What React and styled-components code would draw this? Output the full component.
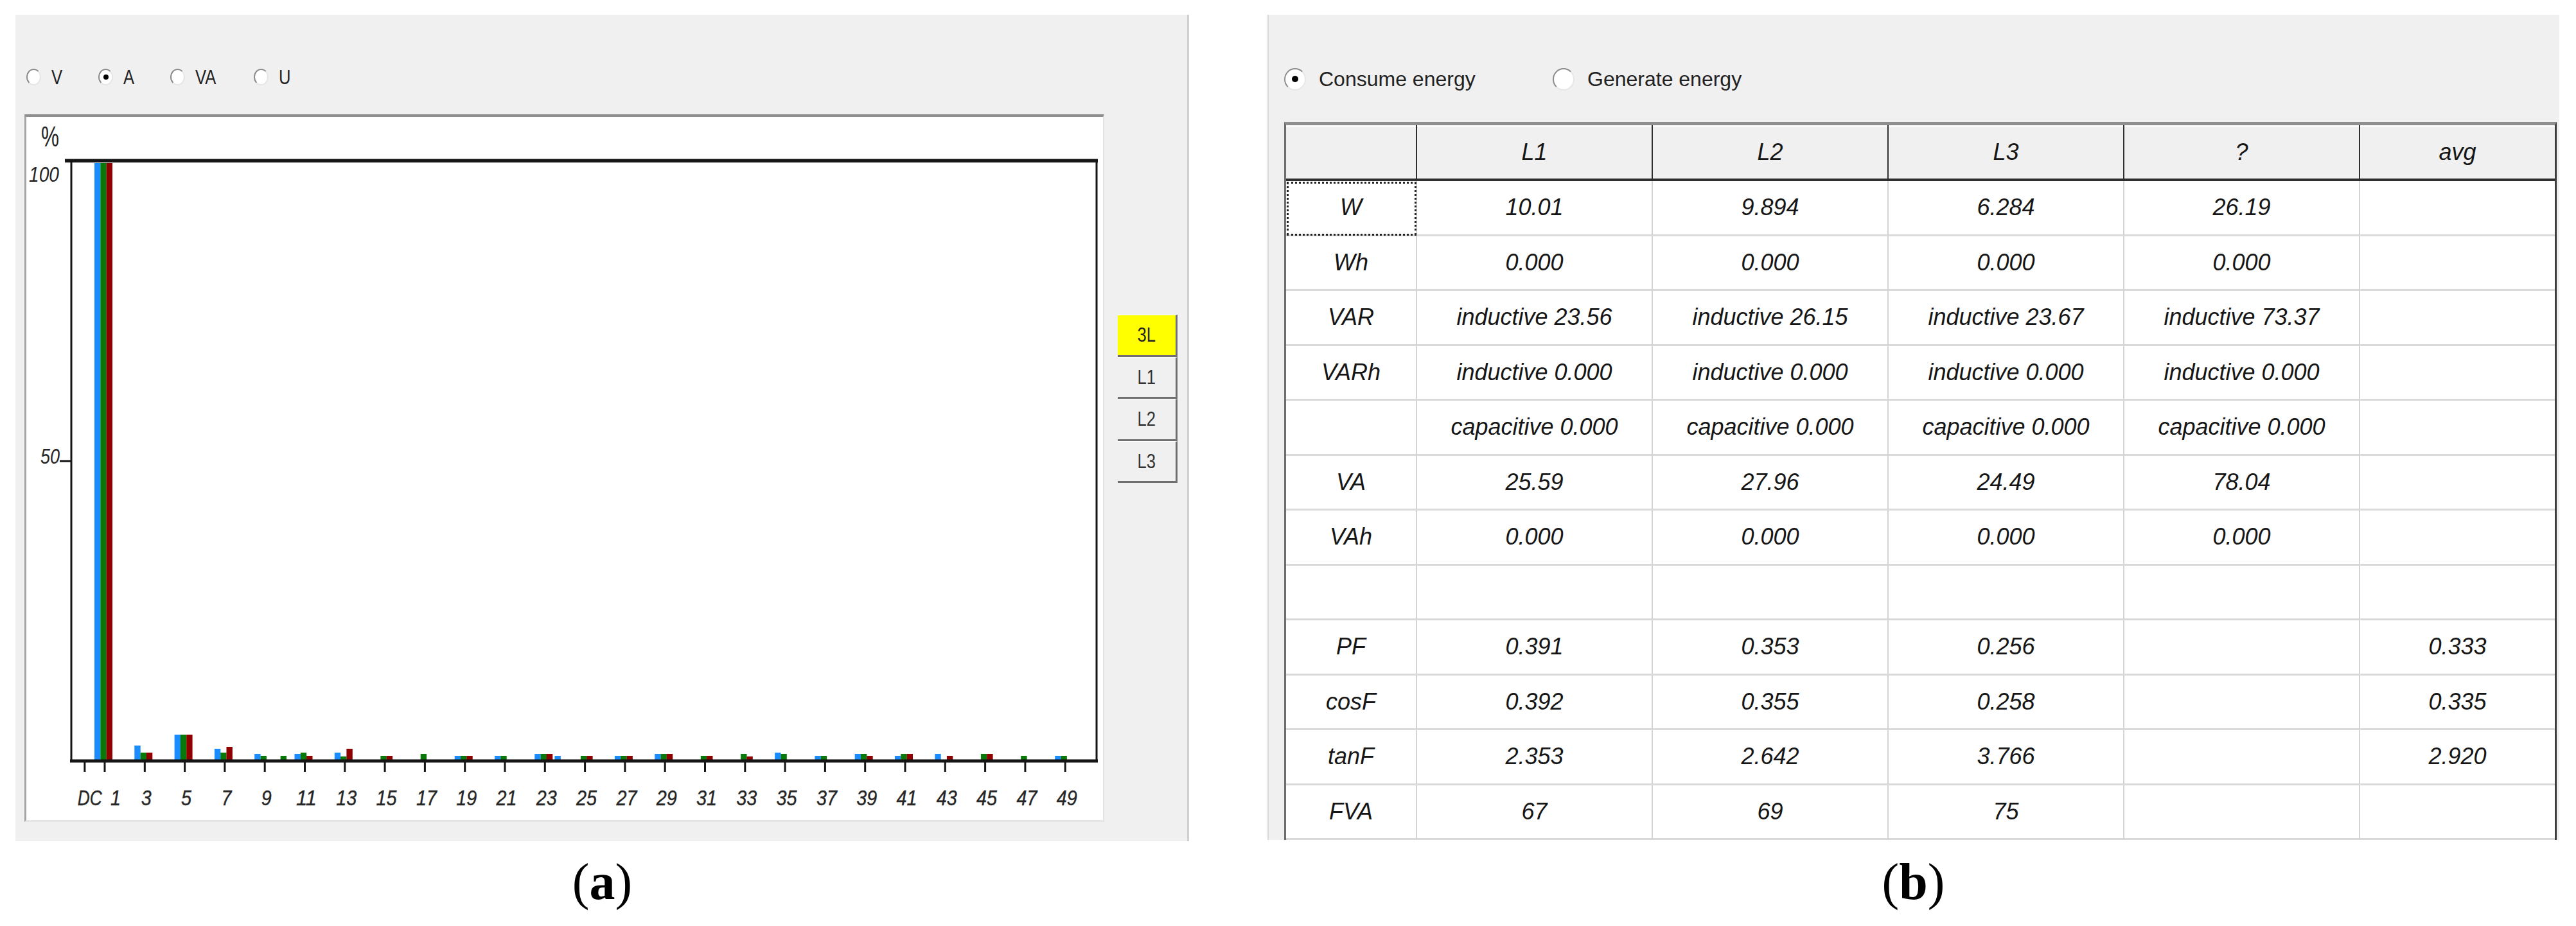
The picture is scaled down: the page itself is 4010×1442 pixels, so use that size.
import React from "react";
import styled, { createGlobalStyle, css } from "styled-components";

const GlobalStyle = createGlobalStyle`
  html, body {
    margin: 0;
    padding: 0;
    background: #ffffff;
    font-family: "Liberation Sans", Arial, sans-serif;
  }
`;

// Page layout
const Page = styled.div`
  width: 4010px;
  height: 1442px;
  padding: 23px 0 0 24px;
  box-sizing: border-box;
  display: flex;
  flex-direction: column;
`;

const TopRow = styled.div`
  display: flex;
  gap: 122px;
  align-items: flex-start;
`;

const CaptionRow = styled.div`
  display: flex;
  gap: 122px;
  margin-top: 23px;
`;

const Caption = styled.div`
  width: ${props => props.$width}px;
  text-align: center;
  font-family: "Liberation Serif", "Times New Roman", serif;
  font-size: 80px;
  line-height: 80px;
  color: #000;
  b {
    font-weight: bold;
  }
`;

// Panels
const PanelA = styled.div`
  width: 1827px;
  height: 1287px;
  box-sizing: border-box;
  background: #f0f0f0;
  border-right: 3px solid #cfcfcf;
  padding-left: 14px;
  display: flex;
  flex-direction: column;
`;

const PanelB = styled.div`
  width: 2011px;
  height: 1285px;
  box-sizing: border-box;
  background: #f0f0f0;
  border-left: 2px solid #dadada;
  padding: 0 4px 0 24px;
  display: flex;
  flex-direction: column;
`;

const RadioRow = styled.div`
  height: ${props => props.$height}px;
  padding-top: ${props => props.$top}px;
  padding-left: ${props => props.$left || 0}px;
  box-sizing: border-box;
  display: flex;
  align-items: center;
  flex-shrink: 0;
`;

const RadioItem = styled.div`
  display: flex;
  align-items: center;
  width: ${props => (props.$width ? `${props.$width}px` : "auto")};
  gap: ${props => props.$gap}px;
`;

const RadioCircle = styled.span`
  position: relative;
  display: inline-block;
  width: ${props => props.$w}px;
  height: ${props => props.$h}px;
  box-sizing: border-box;
  border-radius: 50%;
  background: #ffffff;
  border: 2px solid;
  border-color: #8c8c8c #e6e6e6 #e6e6e6 #8c8c8c;
  ${props => props.$checked && css`
    &::after {
      content: "";
      position: absolute;
      left: 50%;
      top: 50%;
      width: ${props.$dot}px;
      height: ${props.$dot}px;
      margin: -${props.$dot / 2}px 0 0 -${props.$dot / 2}px;
      border-radius: 50%;
      background: #000;
    }
  `}
`;

const RadioLabel = styled.span`
  display: inline-block;
  font-size: ${props => props.$size}px;
  color: #222;
  white-space: nowrap;
  transform: scaleX(${props => props.$squeeze || 1});
  transform-origin: left center;
`;

// Chart area
const ChartRow = styled.div`
  display: flex;
  gap: 21px;
  align-items: flex-start;
`;

const ChartBox = styled.div`
  width: 1681px;
  height: 1102px;
  box-sizing: border-box;
  background: #ffffff;
  border-top: 4px solid #8e8e8e;
  border-left: 3px solid #a3a3a3;
  border-right: 2px solid #e3e3e3;
  border-bottom: 3px solid #e6e6e6;
  svg {
    display: block;
  }
`;

const ButtonStack = styled.div`
  margin-top: 312px;
  width: 93px;
  display: flex;
  flex-direction: column;
`;

const PhaseButton = styled.div`
  height: 65.5px;
  box-sizing: border-box;
  display: flex;
  align-items: center;
  justify-content: center;
  background: ${props => (props.$active ? "#ffff00" : "#f0f0f0")};
  border-right: 3px solid #6f6f6f;
  border-bottom: 3px solid #6f6f6f;
  border-top: 1px solid #ffffff;
  span {
    display: inline-block;
    font-size: 32px;
    color: ${props => (props.$active ? "#222" : "#333")};
    transform: scaleX(0.8);
  }
`;

// Table
const Table = styled.div`
  flex: 1;
  overflow: hidden;
  background: #ffffff;
  border-top: 5px solid #8f8f8f;
  border-left: 3px solid #6e6e6e;
  border-right: 3px solid #3d3d3d;
  display: grid;
  grid-template-columns: 204px repeat(4, 367px) 1fr;
  grid-template-rows: 87px;
  grid-auto-rows: 85.5px;
`;

const Cell = styled.div`
  box-sizing: border-box;
  display: flex;
  align-items: center;
  justify-content: center;
  font-size: 36px;
  font-style: italic;
  color: #161616;
  white-space: nowrap;
  border-bottom: 3px solid #d9d9d9;
  border-right: ${props => (props.$last ? "none" : "2px solid #d3d3d3")};
  ${props => props.$head && css`
    background: #f0f0f0;
    box-shadow: inset 0 3px 0 #fbfbfb;
    border-bottom: 4px solid #2e2e2e;
    border-right: ${props.$last ? "none" : "2px solid #2e2e2e"};
  `}
  ${props => props.$focus && css`
    outline: 3px dotted #222;
    outline-offset: -4px;
  `}
`;

// Data
const headers = ["", "L1", "L2", "L3", "?", "avg"];
const rows = [
  ["W", "10.01", "9.894", "6.284", "26.19", ""],
  ["Wh", "0.000", "0.000", "0.000", "0.000", ""],
  ["VAR", "inductive 23.56", "inductive 26.15", "inductive 23.67", "inductive 73.37", ""],
  ["VARh", "inductive 0.000", "inductive 0.000", "inductive 0.000", "inductive 0.000", ""],
  ["", "capacitive 0.000", "capacitive 0.000", "capacitive 0.000", "capacitive 0.000", ""],
  ["VA", "25.59", "27.96", "24.49", "78.04", ""],
  ["VAh", "0.000", "0.000", "0.000", "0.000", ""],
  ["", "", "", "", "", ""],
  ["PF", "0.391", "0.353", "0.256", "", "0.333"],
  ["cosF", "0.392", "0.355", "0.258", "", "0.335"],
  ["tanF", "2.353", "2.642", "3.766", "", "2.920"],
  ["FVA", "67", "69", "75", "", ""],
];

const TOP = 249;
const AXIS = 1183;
const FULL = AXIS - TOP;

// harmonic: [blue, green, red] bar heights in px above the axis
const harmonics = {
  1: [FULL, FULL, FULL],
  3: [22, 11, 11],
  5: [39, 39, 39],
  7: [17, 11, 20],
  9: [9, 6, 0],
  10: [0, 6, 0],
  11: [9, 11, 6],
  13: [11, 5, 17],
  15: [0, 6, 6],
  17: [0, 9, 0],
  19: [6, 6, 6],
  21: [6, 6, 0],
  23: [9, 9, 9],
  24: [6, 0, 0],
  25: [0, 6, 6],
  27: [6, 6, 6],
  29: [9, 9, 9],
  31: [0, 6, 6],
  33: [0, 9, 5],
  35: [11, 9, 0],
  37: [6, 6, 0],
  39: [9, 9, 6],
  41: [6, 9, 9],
  43: [9, 0, 6],
  45: [0, 9, 9],
  47: [0, 6, 0],
  49: [6, 6, 0],
};

const barColors = ["#1a8cff", "#087808", "#8f0000"];
const hx = h => 163 + (h - 1) * 31.15;

function HarmonicChart() {
  const bars = [];
  Object.keys(harmonics).forEach(key => {
    const h = Number(key);
    const x = hx(h);
    harmonics[h].forEach((v, i) => {
      if (!v) return;
      bars.push(
        <rect key={`${h}-${i}`} x={x - 16 + i * 9.3} y={AXIS - v} width={9.4} height={v} fill={barColors[i]} />
      );
    });
  });

  const labels = [{ t: "DC", h: 0, dx: 8, w: 38 }];
  for (let h = 1; h <= 49; h += 2) {
    labels.push({ t: String(h), h, dx: h === 1 ? 17 : 2.5, w: h < 10 ? 16 : 32 });
  }

  const textProps = {
    fontFamily: "Liberation Sans, Arial, sans-serif",
    fill: "#262626",
    lengthAdjust: "spacingAndGlyphs",
  };

  return (
    <svg width="1676" height="1095" viewBox="41 182 1676 1095">
      <text x={64} y={228} fontSize={44} textLength={28} {...textProps}>%</text>
      <text x={45} y={283} fontSize={34} fontStyle="italic" textLength={47} {...textProps}>100</text>
      <text x={63} y={722} fontSize={34} fontStyle="italic" textLength={30} {...textProps}>50</text>
      <line x1={93} y1={718} x2={111} y2={718} stroke="#111" strokeWidth={3} />

      {bars}

      <line x1={101} y1={253} x2={1709} y2={253} stroke="#b5b5b5" strokeWidth={2} />
      <line x1={101} y1={250} x2={1709} y2={250} stroke="#151515" strokeWidth={5} />
      <line x1={111} y1={249} x2={111} y2={1187} stroke="#151515" strokeWidth={3} />
      <line x1={1707} y1={249} x2={1707} y2={1187} stroke="#151515" strokeWidth={3} />
      <line x1={109} y1={1185} x2={1709} y2={1185} stroke="#151515" strokeWidth={5} />

      {labels.map(l => (
        <g key={l.t}>
          <line x1={hx(l.h)} y1={1186} x2={hx(l.h)} y2={1202} stroke="#151515" strokeWidth={3} />
          <text
            x={hx(l.h) + l.dx}
            y={1254}
            fontSize={33}
            fontStyle="italic"
            textAnchor="middle"
            textLength={l.w}
            stroke="#262626"
            strokeWidth={0.4}
            {...textProps}
          >
            {l.t}
          </text>
        </g>
      ))}
    </svg>
  );
}

function Radio({ label, checked, w, h, dot, size, squeeze, gap, width }) {
  return (
    <RadioItem $gap={gap} $width={width}>
      <RadioCircle $w={w} $h={h} $dot={dot} $checked={checked} />
      <RadioLabel $size={size} $squeeze={squeeze}>{label}</RadioLabel>
    </RadioItem>
  );
}

export default function App() {
  const small = { w: 23, h: 26, dot: 8, size: 32, squeeze: 0.8, gap: 16 };
  const big = { w: 34, h: 35, dot: 10, size: 32, gap: 20 };
  return (
    <>
      <GlobalStyle />
      <Page>
        <TopRow>
          <PanelA>
            <RadioRow $height={155} $top={39} $left={3}>
              <Radio label="V" width={112} {...small} />
              <Radio label="A" width={112} checked {...small} />
              <Radio label="VA" width={130} {...small} />
              <Radio label="U" {...small} />
            </RadioRow>
            <ChartRow>
              <ChartBox>
                <HarmonicChart />
              </ChartBox>
              <ButtonStack>
                <PhaseButton $active><span>3L</span></PhaseButton>
                <PhaseButton><span>L1</span></PhaseButton>
                <PhaseButton><span>L2</span></PhaseButton>
                <PhaseButton><span>L3</span></PhaseButton>
              </ButtonStack>
            </ChartRow>
          </PanelA>

          <PanelB>
            <RadioRow $height={167} $top={33}>
              <Radio label="Consume energy" width={418} checked {...big} />
              <Radio label="Generate energy" {...big} />
            </RadioRow>
            <Table>
              {headers.map((hd, i) => (
                <Cell key={`h${i}`} $head $last={i === headers.length - 1}>{hd}</Cell>
              ))}
              {rows.map((row, r) =>
                row.map((val, c) => (
                  <Cell key={`${r}-${c}`} $last={c === row.length - 1} $focus={r === 0 && c === 0}>
                    {val}
                  </Cell>
                ))
              )}
            </Table>
          </PanelB>
        </TopRow>

        <CaptionRow>
          <Caption $width={1827}>(<b>a</b>)</Caption>
          <Caption $width={2011}>(<b>b</b>)</Caption>
        </CaptionRow>
      </Page>
    </>
  );
}
